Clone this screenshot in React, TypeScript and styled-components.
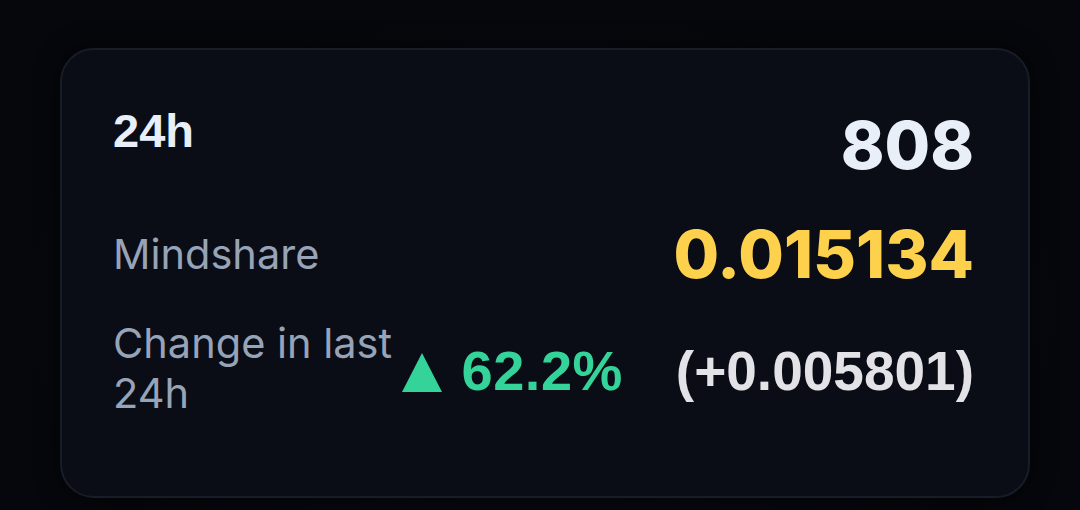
import React from "react";
import styled, { createGlobalStyle } from "styled-components";

const GlobalStyle = createGlobalStyle`
  html, body {
    margin: 0;
    padding: 0;
    background-color: #05070c;
  }
  body {
    width: 1080px;
    height: 510px;
    overflow: hidden;
  }
`;

const Page = styled.main`
  width: 1080px;
  height: 510px;
  box-sizing: border-box;
  padding: 48px 50px 12px 60px;
  background: radial-gradient(ellipse at 50% 60%, #090c14 0%, #05070c 70%);
`;

const Card = styled.section`
  box-sizing: border-box;
  width: 970px;
  height: 450px;
  padding: 55px 54px 0 51px;
  background-color: #0a0d16;
  border: 2px solid #181c26;
  border-radius: 34px;
  box-shadow: 0 0 24px rgba(0, 0, 0, 0.6);
  display: flex;
  flex-direction: column;
`;

const Row = styled.div<{ $align: string; $top: number }>`
  display: flex;
  justify-content: space-between;
  align-items: ${(p) => p.$align};
  margin-top: ${(p) => p.$top}px;
`;

const Period = styled.span`
  font-family: "Liberation Sans", Arial, sans-serif;
  font-weight: 700;
  font-size: 47px;
  line-height: 51px;
  color: #e9eff9;
`;

const BigNumber = styled.span<{ $color: string }>`
  font-family: Inter, "Noto Sans", sans-serif;
  font-weight: 800;
  font-size: 66px;
  line-height: 80px;
  color: ${(p) => p.$color};
`;

const Label = styled.span`
  flex: 1;
  min-width: 0;
  font-family: Inter, "Noto Sans", sans-serif;
  font-weight: 400;
  font-size: 41.5px;
  line-height: 50px;
  color: #97a3b6;
`;

const ChangeGroup = styled.div`
  display: flex;
  align-items: center;
  margin-top: 6px;
`;

const Up = styled.span`
  display: flex;
  align-items: center;
  gap: 20px;
  font-family: "Liberation Sans", Arial, sans-serif;
  font-weight: 700;
  font-size: 56px;
  line-height: 60px;
  letter-spacing: 0.5px;
  color: #34d399;
`;

const Delta = styled.span`
  margin-left: 53px;
  font-family: "Liberation Sans", Arial, sans-serif;
  font-weight: 700;
  font-size: 55px;
  line-height: 60px;
  color: #e2e2e7;
`;

const Triangle = () => (
  <svg width="40" height="39" viewBox="0 0 40 39" style={{ marginTop: 2 }}>
    <polygon points="20,0 40,39 0,39" fill="#34d399" />
  </svg>
);

export default function App() {
  return (
    <>
      <GlobalStyle />
      <Page>
        <Card>
          <Row $align="flex-start" $top={0}>
            <Period>24h</Period>
            <BigNumber $color="#e9eff9">808</BigNumber>
          </Row>
          <Row $align="center" $top={29}>
            <Label>Mindshare</Label>
            <BigNumber $color="#fdd14b">0.015134</BigNumber>
          </Row>
          <Row $align="center" $top={24}>
            <Label>Change in last 24h</Label>
            <ChangeGroup>
              <Up>
                <Triangle />
                62.2%
              </Up>
              <Delta>(+0.005801)</Delta>
            </ChangeGroup>
          </Row>
        </Card>
      </Page>
    </>
  );
}
